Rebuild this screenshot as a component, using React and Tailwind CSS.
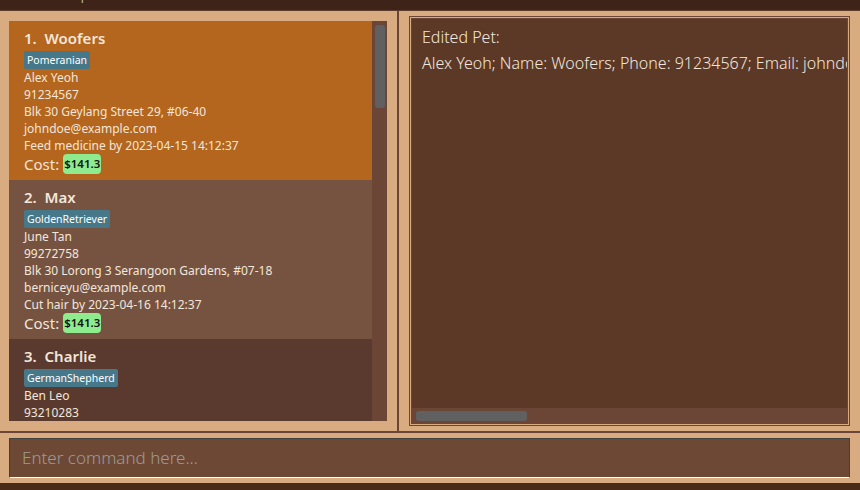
import React from 'react';

const pets = [
  {
    idx: 1,
    name: 'Woofers',
    tag: 'Pomeranian',
    lines: [
      'Alex Yeoh',
      '91234567',
      'Blk 30 Geylang Street 29, #06-40',
      'johndoe@example.com',
      'Feed medicine by 2023-04-15 14:12:37',
    ],
    cost: '$141.3',
    bg: 'bg-[#b4651e]',
  },
  {
    idx: 2,
    name: 'Max',
    tag: 'GoldenRetriever',
    lines: [
      'June Tan',
      '99272758',
      'Blk 30 Lorong 3 Serangoon Gardens, #07-18',
      'berniceyu@example.com',
      'Cut hair by 2023-04-16 14:12:37',
    ],
    cost: '$141.3',
    bg: 'bg-[#765341]',
  },
  {
    // only the part that fits in the list is visible
    idx: 3,
    name: 'Charlie',
    tag: 'GermanShepherd',
    lines: ['Ben Leo', '93210283'],
    cost: null,
    bg: 'bg-[#5a3a2f]',
  },
];

const font = { fontFamily: '"Noto Sans", "Open Sans", sans-serif' };

const PetCard = ({ pet }) => (
  <div className={`${pet.bg} pl-[15px] pt-[7px] pb-[6px] h-[159px] shrink-0 text-[#f3e6da]`}>
    <div className="text-[15px] leading-[20px] font-semibold">
      {pet.idx}.&nbsp;&nbsp;{pet.name}
    </div>
    <div className="mt-[3px] flex">
      <span className="bg-[#47788a] text-white text-[10.5px] leading-[18px] px-[3px] rounded-[2px]">
        {pet.tag}
      </span>
    </div>
    <div className="text-[12px] leading-[17px]">
      {pet.lines.map((l, i) => (
        <div key={i}>{l}</div>
      ))}
    </div>
    {pet.cost && (
      <div className="flex items-center h-[20px]">
        <span className="text-[15px] leading-[20px]">Cost:</span>
        <span className="ml-[4px] bg-[#8eec8e] text-[#111] text-[11.5px] font-semibold leading-[20px] px-[1px] rounded-[4px]">
          {pet.cost}
        </span>
      </div>
    )}
  </div>
);

export default function App() {
  return (
    <div style={font} className="w-[860px] h-[490px] flex flex-col bg-[#d8ab80] overflow-hidden">
      {/* menu bar, mostly cut off */}
      <div className="h-[11px] bg-[#3e2319] border-b border-[#5e3b2a] overflow-hidden shrink-0">
        <div className="pl-[62px] -mt-[12px] text-[12px] leading-[16px] text-[#bdbdbd]">
          <span>Help</span>
        </div>
      </div>

      <div className="flex h-[420px] shrink-0">
        {/* left: pet list */}
        <div className="w-[397px] shrink-0 pl-[9px] pr-[10px] py-[10px] flex">
          <div className="flex-1 flex bg-[#6b4535] overflow-hidden">
            <div className="w-[363px] flex flex-col overflow-hidden">
              {pets.map(p => (
                <PetCard key={p.idx} pet={p} />
              ))}
            </div>
            <div className="w-[15px] pt-[4px] flex justify-center">
              <div className="w-[10px] h-[83px] rounded-[3px] bg-[#606060]" />
            </div>
          </div>
        </div>

        <div className="w-[2px] shrink-0 bg-[#6b4535]" />

        {/* right: result display */}
        <div className="flex-1 min-w-0 px-[10px] py-[5px] flex">
          <div className="flex-1 min-w-0 border border-[#6b4535] p-[1px] flex">
            <div className="flex-1 min-w-0 border border-[#6b4535] bg-[#5c3827] flex flex-col overflow-hidden">
              <div className="flex-1 min-w-0 pl-[10px] pt-[5px] text-[16px] leading-[26px] font-light text-[#f3e6da] whitespace-nowrap overflow-hidden">
                <div>Edited Pet:</div>
                <div>Alex Yeoh; Name: Woofers; Phone: 91234567; Email: johndoe@example.com</div>
              </div>
              <div className="h-[15px] bg-[#6b4535] pl-[4px] pt-[3px]">
                <div className="w-[111px] h-[10px] rounded-[3px] bg-[#606060]" />
              </div>
            </div>
          </div>
        </div>
      </div>

      <div className="h-[2px] bg-[#6b4535] shrink-0" />

      {/* command box */}
      <div className="pl-[9px] pr-[10px] py-[5px] shrink-0">
        <div className="h-[40px] bg-[#6d4935] border border-[#404040] border-b-white flex items-center pl-[12px]">
          <span className="text-[17px] text-[#9c9a98] font-light">Enter command here...</span>
        </div>
      </div>

      <div className="flex-1 bg-[#4a2c19]" />
    </div>
  );
}
